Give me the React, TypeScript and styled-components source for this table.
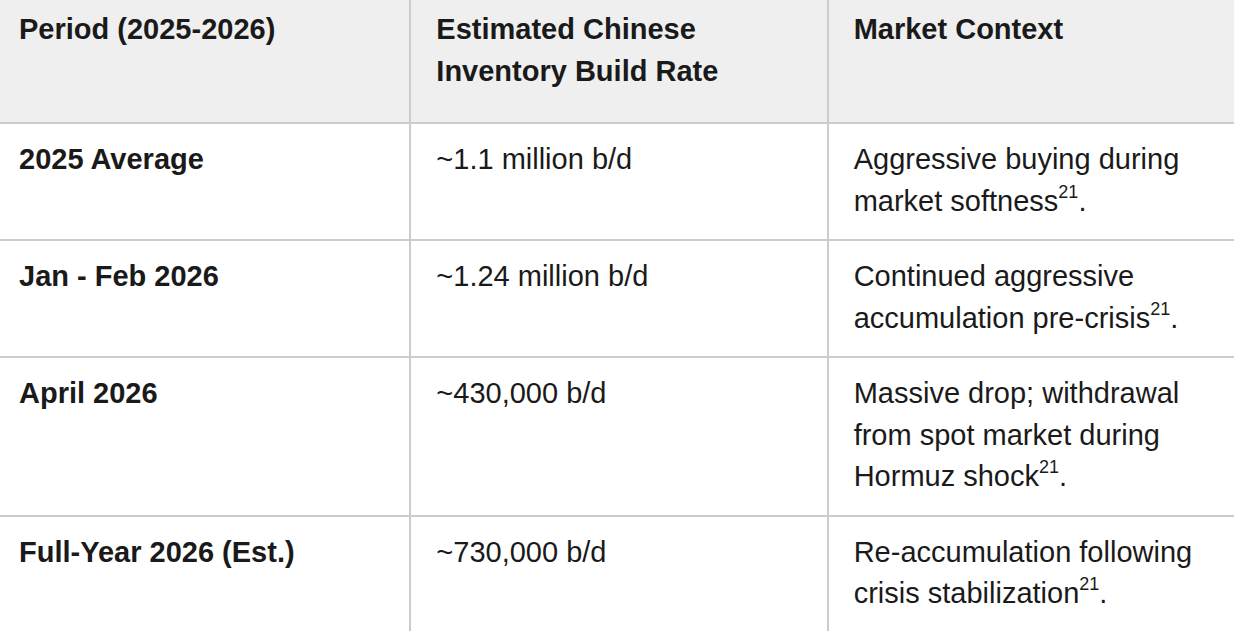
import styled, { createGlobalStyle } from 'styled-components';

type Row = {
  period: string;
  rate: string;
  context: string;
  source: string;
};

const rows: Row[] = [
  { period: '2025 Average', rate: '~1.1 million b/d', context: 'Aggressive buying during market softness', source: '21' },
  { period: 'Jan - Feb 2026', rate: '~1.24 million b/d', context: 'Continued aggressive accumulation pre-crisis', source: '21' },
  { period: 'April 2026', rate: '~430,000 b/d', context: 'Massive drop; withdrawal from spot market during Hormuz shock', source: '21' },
  { period: 'Full-Year 2026 (Est.)', rate: '~730,000 b/d', context: 'Re-accumulation following crisis stabilization', source: '21' },
];

function App() {
  return (
    <>
      <GlobalStyle />
      <StyledTable>
        <thead>
          <tr>
            <StyledHeadCell>Period (2025-2026)</StyledHeadCell>
            <StyledHeadCell>Estimated Chinese Inventory Build Rate</StyledHeadCell>
            <StyledHeadCell>Market Context</StyledHeadCell>
          </tr>
        </thead>
        <tbody>
          {rows.map((row) => (
            <tr key={row.period}>
              <StyledCell $bold>{row.period}</StyledCell>
              <StyledCell>{row.rate}</StyledCell>
              <StyledCell>
                {row.context}
                <StyledSup>{row.source}</StyledSup>.
              </StyledCell>
            </tr>
          ))}
        </tbody>
      </StyledTable>
    </>
  );
}

const GlobalStyle = createGlobalStyle`
  html, body {
    margin: 0;
    padding: 0;
    background: #ffffff;
    overflow: hidden;
  }
  body {
    font-family: "Liberation Sans", Arial, Helvetica, sans-serif;
    color: #1a1a1a;
  }
`;

const StyledTable = styled.table`
  width: 1254px;
  margin: -10px 0 0 -8px;
  border-collapse: collapse;
  table-layout: fixed;
  font-size: 29px;
  line-height: 41.5px;
`;

const StyledHeadCell = styled.th`
  background: #efefef;
  border: 2px solid #cccccc;
  padding: 17px 24px 30px 25px;
  text-align: left;
  vertical-align: top;
  font-weight: 700;
`;

const StyledCell = styled.td<{ $bold?: boolean }>`
  border: 2px solid #cccccc;
  padding: 15px 24px 17px 25px;
  vertical-align: top;
  font-weight: ${(props) => (props.$bold ? '700' : '400')};
`;

const StyledSup = styled.sup`
  font-size: 18px;
  line-height: 0;
  vertical-align: 0;
  position: relative;
  top: -13px;
`;

export default App;
